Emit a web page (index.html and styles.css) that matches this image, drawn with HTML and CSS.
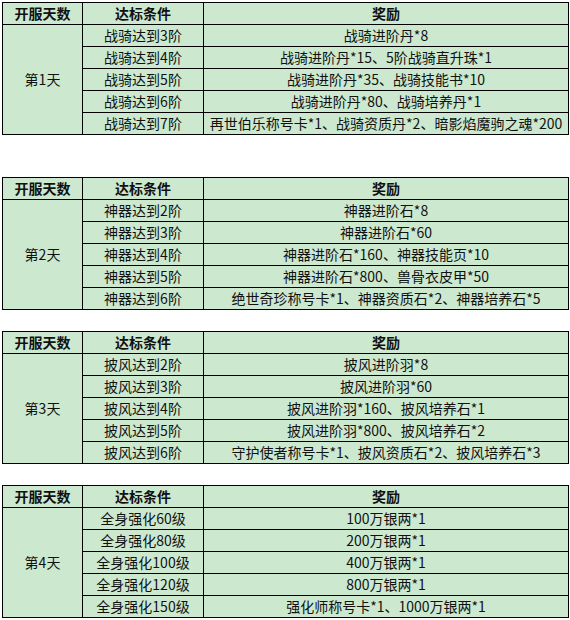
FILE: index.html
```html
<!DOCTYPE html>
<html lang="zh-CN">
<head>
<meta charset="utf-8">
<title>开服奖励</title>
<link rel="stylesheet" href="styles.css">
</head>
<body>
<div class="page">
  <table class="tbl first">
    <colgroup><col class="c1"><col class="c2"><col class="c3"></colgroup>
    <tr class="head"><td>开服天数</td><td>达标条件</td><td>奖励</td></tr>
    <tr><td rowspan="5">第1天</td><td>战骑达到3阶</td><td>战骑进阶丹*8</td></tr>
    <tr><td>战骑达到4阶</td><td>战骑进阶丹*15、5阶战骑直升珠*1</td></tr>
    <tr><td>战骑达到5阶</td><td>战骑进阶丹*35、战骑技能书*10</td></tr>
    <tr><td>战骑达到6阶</td><td>战骑进阶丹*80、战骑培养丹*1</td></tr>
    <tr><td>战骑达到7阶</td><td>再世伯乐称号卡*1、战骑资质丹*2、暗影焰魔驹之魂*200</td></tr>
  </table>

  <table class="tbl second">
    <colgroup><col class="c1"><col class="c2"><col class="c3"></colgroup>
    <tr class="head"><td>开服天数</td><td>达标条件</td><td>奖励</td></tr>
    <tr><td rowspan="5">第2天</td><td>神器达到2阶</td><td>神器进阶石*8</td></tr>
    <tr><td>神器达到3阶</td><td>神器进阶石*60</td></tr>
    <tr><td>神器达到4阶</td><td>神器进阶石*160、神器技能页*10</td></tr>
    <tr><td>神器达到5阶</td><td>神器进阶石*800、兽骨衣皮甲*50</td></tr>
    <tr><td>神器达到6阶</td><td>绝世奇珍称号卡*1、神器资质石*2、神器培养石*5</td></tr>
  </table>

  <table class="tbl">
    <colgroup><col class="c1"><col class="c2"><col class="c3"></colgroup>
    <tr class="head"><td>开服天数</td><td>达标条件</td><td>奖励</td></tr>
    <tr><td rowspan="5">第3天</td><td>披风达到2阶</td><td>披风进阶羽*8</td></tr>
    <tr><td>披风达到3阶</td><td>披风进阶羽*60</td></tr>
    <tr><td>披风达到4阶</td><td>披风进阶羽*160、披风培养石*1</td></tr>
    <tr><td>披风达到5阶</td><td>披风进阶羽*800、披风培养石*2</td></tr>
    <tr><td>披风达到6阶</td><td>守护使者称号卡*1、披风资质石*2、披风培养石*3</td></tr>
  </table>

  <table class="tbl">
    <colgroup><col class="c1"><col class="c2"><col class="c3"></colgroup>
    <tr class="head"><td>开服天数</td><td>达标条件</td><td>奖励</td></tr>
    <tr><td rowspan="5">第4天</td><td>全身强化60级</td><td>100万银两*1</td></tr>
    <tr><td>全身强化80级</td><td>200万银两*1</td></tr>
    <tr><td>全身强化100级</td><td>400万银两*1</td></tr>
    <tr><td>全身强化120级</td><td>800万银两*1</td></tr>
    <tr><td>全身强化150级</td><td>强化师称号卡*1、1000万银两*1</td></tr>
  </table>
</div>
</body>
</html>
```

FILE: styles.css
```css
html, body {
  margin: 0;
  padding: 0;
  background: #ffffff;
}

.page {
  padding: 2px 0 0 2px;
  font-family: "Noto Sans CJK SC", "Liberation Sans", sans-serif;
  font-size: 14px;
  color: #111;
}

.tbl {
  table-layout: fixed;
  width: 567px;
  border-collapse: separate;
  border-spacing: 0;
  border-top: 1px solid #000;
  border-left: 1px solid #000;
  background: #cce8cf;
  margin: 0 0 21px 0;
}

.tbl.first {
  margin-bottom: 42px;
}

.c1 { width: 80px; }
.c2 { width: 121px; }
.c3 { width: 365px; }

.tbl td {
  padding: 0;
  border-right: 1px solid #000;
  border-bottom: 1px solid #000;
  line-height: 21px;
  text-align: center;
  vertical-align: middle;
  white-space: nowrap;
  overflow: hidden;
}

.tbl .head td {
  font-weight: bold;
}
```
